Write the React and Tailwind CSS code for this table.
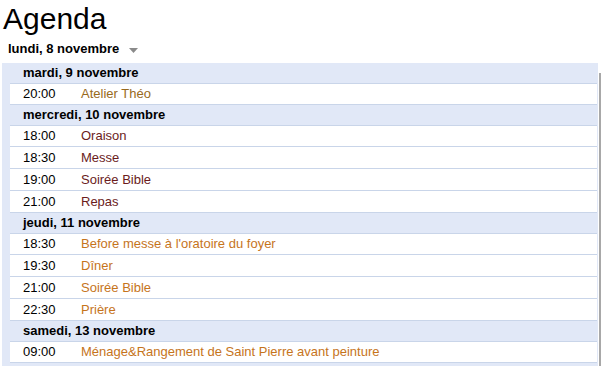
const days = [
  {
    label: "mardi, 9 novembre",
    events: [{ time: "20:00", title: "Atelier Théo", color: "text-[#98691c]" }],
  },
  {
    label: "mercredi, 10 novembre",
    events: [
      { time: "18:00", title: "Oraison", color: "text-[#6b1c1c]" },
      { time: "18:30", title: "Messe", color: "text-[#6b1c1c]" },
      { time: "19:00", title: "Soirée Bible", color: "text-[#6b1c1c]" },
      { time: "21:00", title: "Repas", color: "text-[#6b1c1c]" },
    ],
  },
  {
    label: "jeudi, 11 novembre",
    events: [
      { time: "18:30", title: "Before messe à l'oratoire du foyer", color: "text-[#c6741c]" },
      { time: "19:30", title: "Dîner", color: "text-[#c6741c]" },
      { time: "21:00", title: "Soirée Bible", color: "text-[#c6741c]" },
      { time: "22:30", title: "Prière", color: "text-[#c6741c]" },
    ],
  },
  {
    label: "samedi, 13 novembre",
    events: [
      { time: "09:00", title: "Ménage&Rangement de Saint Pierre avant peinture", color: "text-[#c6741c]" },
    ],
  },
];

export default function App() {
  return (
    <div className="h-[366px] w-[602px] overflow-hidden bg-white font-['Liberation_Sans',Arial,sans-serif] text-black">
      <h1 className="pl-[3px] pt-[2px] text-[30px] leading-[34px]">Agenda</h1>
      <div className="flex items-center pl-[8px] pt-[4px] h-[22px]">
        <span className="text-[13px] font-bold">lundi, 8 novembre</span>
        {/* dropdown arrow */}
        <svg className="ml-[10px] mt-[2px]" width="9" height="5" viewBox="0 0 9 5">
          <path d="M0 0h9L4.5 5z" fill="#8a8a8a" />
        </svg>
      </div>

      <div className="mt-[5px] flex">
        <div className="ml-[2px] w-[596px] bg-[#e1e8f7] pl-[8px] pr-[1px] pb-[6px]">
          {days.map((day) => (
            <div key={day.label}>
              <div className="flex h-[20px] items-center pl-[13px] text-[13px] font-bold">
                {day.label}
              </div>
              {day.events.map((ev, i) => (
                <div
                  key={ev.time + ev.title}
                  className={`flex h-[22px] items-center bg-white pl-[13px] text-[13px] border-[#c9d5e9] border-b ${
                    i === 0 ? "border-t" : ""
                  }`}
                >
                  <span className="w-[58px] shrink-0">{ev.time}</span>
                  <span className={ev.color}>{ev.title}</span>
                </div>
              ))}
            </div>
          ))}
        </div>
        <div className="ml-[1px] mt-[10px] h-[300px] w-[2px] bg-[#a8a8a8]" />
      </div>
    </div>
  );
}
